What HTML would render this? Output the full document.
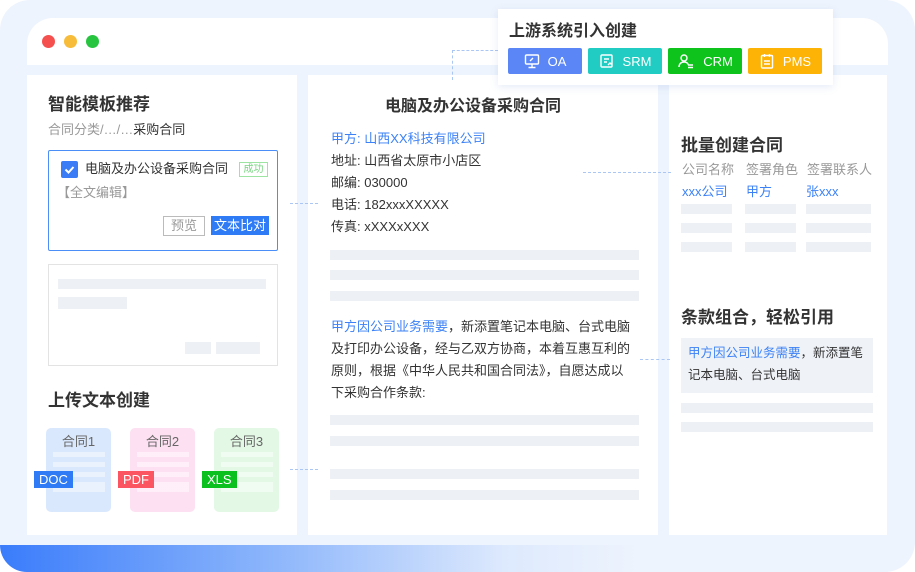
<!DOCTYPE html>
<html><head><meta charset="utf-8"><style>
*{margin:0;padding:0;box-sizing:border-box}
body{width:915px;height:572px;background:#fff;font-family:"Liberation Sans","Noto Sans CJK SC",sans-serif;position:relative;overflow:hidden;color:#333}
.abs{position:absolute}
.bg{left:0;top:0;width:915px;height:572px;background:#eef4fd;border-radius:30px}
.win{left:27px;top:18px;width:861px;height:47px;background:#fff;border-radius:26px 26px 0 0}
.dot{width:13px;height:13px;border-radius:50%;top:35px}
.panel{background:#fff;top:75px;height:460px}
.bar{background:#edf0f5;height:10px}
.h{font-weight:bold;font-size:17px;color:#333}
.t{font-size:13px;color:#333;line-height:22px}
.blue{color:#3c82f6}
.dash{border-top:1.5px dashed #a9c6f5;height:0}
.btn{top:48px;height:26px;width:74px;border-radius:2px;color:#fff;font-size:13px;display:flex;align-items:center;justify-content:center;gap:8px}
.card{top:428px;width:65px;height:84px;border-radius:5px}
.tag{color:#fff;font-size:13px;padding:0 5px;height:17px;line-height:17px;top:471px}
</style></head><body>
<div class="abs bg"></div>
<div class="abs" style="left:0;top:545px;width:915px;height:27px;border-radius:0 0 0 30px;background:linear-gradient(90deg,#3a7cfb 0%,#8db6fb 30%,#dde9fd 55%,rgba(238,244,253,0) 70%)"></div>
<div class="abs win"></div>
<div class="abs dot" style="left:42px;background:#f5504e"></div>
<div class="abs dot" style="left:64px;background:#f7bc39"></div>
<div class="abs dot" style="left:86px;background:#27c43f"></div>

<div class="abs panel" style="left:27px;width:270px"></div>
<div class="abs panel" style="left:308px;width:350px"></div>
<div class="abs panel" style="left:669px;width:218px"></div>

<!-- left -->
<div class="abs h" style="left:48px;top:90px">智能模板推荐</div>
<div class="abs" style="left:48px;top:119px;font-size:13px;color:#999">合同分类/…/…<span style="color:#333">采购合同</span></div>
<div class="abs" style="left:48px;top:150px;width:230px;height:101px;border:1.5px solid #4c8ef7;border-radius:2px"></div>
<div class="abs" style="left:61px;top:161px;width:17px;height:17px;background:#3a7cf6;border-radius:2px"><svg width="17" height="17"><path d="M4.5 8.5l3 3 5-5.5" stroke="#fff" stroke-width="2" fill="none"/></svg></div>
<div class="abs t" style="left:85px;top:158px">电脑及办公设备采购合同</div>
<div class="abs" style="left:239px;top:162px;width:29px;height:15px;border:1px solid #9de3a2;color:#7ad583;font-size:10px;line-height:13px;text-align:center">成功</div>
<div class="abs" style="left:57px;top:182px;font-size:13px;color:#999">【全文编辑】</div>
<div class="abs" style="left:163px;top:216px;width:42px;height:20px;border:1px solid #bbb;color:#999;font-size:13px;text-align:center;line-height:18px">预览</div>
<div class="abs" style="left:211px;top:216px;width:58px;height:19px;background:#2f7bf6;color:#fff;font-size:13px;text-align:center;line-height:19px">文本比对</div>
<div class="abs" style="left:48px;top:264px;width:230px;height:102px;border:1px solid #e3e3e3"></div>
<div class="abs bar" style="left:58px;top:279px;width:208px"></div>
<div class="abs bar" style="left:58px;top:297px;width:69px;height:12px"></div>
<div class="abs bar" style="left:185px;top:342px;width:26px;height:12px"></div>
<div class="abs bar" style="left:216px;top:342px;width:44px;height:12px"></div>
<div class="abs h" style="left:48px;top:386px">上传文本创建</div>
<div class="abs card" style="left:46px;background:#dae8fd"><div style="text-align:center;font-size:13px;color:#666;margin-top:3px">合同1</div></div>
<div class="abs card" style="left:130px;background:#fde0f1"><div style="text-align:center;font-size:13px;color:#666;margin-top:3px">合同2</div></div>
<div class="abs card" style="left:214px;background:#e3f8e5"><div style="text-align:center;font-size:13px;color:#666;margin-top:3px">合同3</div></div>
<div class="abs" style="left:53px;top:452px;width:52px;height:40px;background:linear-gradient(#f4f8ff 0 5px,transparent 5px 10px,#f4f8ff 10px 15px,transparent 15px 20px,#f4f8ff 20px 25px,transparent 25px 30px,#f4f8ff 30px 35px);opacity:.6"></div>
<div class="abs" style="left:137px;top:452px;width:52px;height:40px;background:linear-gradient(#fff5fb 0 5px,transparent 5px 10px,#fff5fb 10px 15px,transparent 15px 20px,#fff5fb 20px 25px,transparent 25px 30px,#fff5fb 30px 35px);opacity:.7"></div>
<div class="abs" style="left:221px;top:452px;width:52px;height:40px;background:linear-gradient(#f6fdf7 0 5px,transparent 5px 10px,#f6fdf7 10px 15px,transparent 15px 20px,#f6fdf7 20px 25px,transparent 25px 30px,#f6fdf7 30px 35px);opacity:.7"></div>
<div class="abs tag" style="left:34px;background:#2f7bf6">DOC</div>
<div class="abs tag" style="left:118px;background:#fb5561">PDF</div>
<div class="abs tag" style="left:202px;background:#0ac01e">XLS</div>

<!-- middle -->
<div class="abs h" style="left:385px;top:92px;font-size:16px">电脑及办公设备采购合同</div>
<div class="abs t" style="left:331px;top:128px"><span class="blue">甲方: 山西XX科技有限公司</span><br>地址: 山西省太原市小店区<br>邮编: 030000<br>电话: 182xxxXXXXX<br>传真: xXXXxXXX</div>
<div class="abs bar" style="left:330px;top:250px;width:309px"></div>
<div class="abs bar" style="left:330px;top:270px;width:309px"></div>
<div class="abs bar" style="left:330px;top:291px;width:309px"></div>
<div class="abs t" style="left:331px;top:316px;width:300px"><span class="blue">甲方因公司业务需要</span>，新添置笔记本电脑、台式电脑及打印办公设备，经与乙双方协商，本着互惠互利的原则，根据《中华人民共和国合同法》，自愿达成以下采购合作条款:</div>
<div class="abs bar" style="left:330px;top:415px;width:309px"></div>
<div class="abs bar" style="left:330px;top:436px;width:309px"></div>
<div class="abs bar" style="left:330px;top:469px;width:309px"></div>
<div class="abs bar" style="left:330px;top:490px;width:309px"></div>

<!-- right -->
<div class="abs h" style="left:681px;top:131px">批量创建合同</div>
<div class="abs" style="left:682px;top:159px;font-size:13px;color:#999">公司名称</div>
<div class="abs" style="left:746px;top:159px;font-size:13px;color:#999">签署角色</div>
<div class="abs" style="left:807px;top:159px;font-size:13px;color:#999">签署联系人</div>
<div class="abs blue" style="left:682px;top:181px;font-size:13px">xxx公司</div>
<div class="abs blue" style="left:746px;top:181px;font-size:13px">甲方</div>
<div class="abs blue" style="left:806px;top:181px;font-size:13px">张xxx</div>
<div class="abs bar" style="left:681px;top:204px;width:51px"></div><div class="abs bar" style="left:745px;top:204px;width:51px"></div><div class="abs bar" style="left:806px;top:204px;width:65px"></div>
<div class="abs bar" style="left:681px;top:223px;width:51px"></div><div class="abs bar" style="left:745px;top:223px;width:51px"></div><div class="abs bar" style="left:806px;top:223px;width:65px"></div>
<div class="abs bar" style="left:681px;top:242px;width:51px"></div><div class="abs bar" style="left:745px;top:242px;width:51px"></div><div class="abs bar" style="left:806px;top:242px;width:65px"></div>
<div class="abs h" style="left:681px;top:303px">条款组合，轻松引用</div>
<div class="abs t" style="left:681px;top:338px;width:192px;height:55px;background:#eff2f7;padding:4px 7px;line-height:22px;font-size:12.5px"><span class="blue">甲方因公司业务需要</span>，新添置笔记本电脑、台式电脑</div>
<div class="abs bar" style="left:681px;top:403px;width:192px"></div>
<div class="abs bar" style="left:681px;top:422px;width:192px"></div>

<!-- dashes -->
<div class="abs" style="left:452px;top:50px;width:0;height:30px;border-left:1.5px dashed #a9c6f5"></div>
<div class="abs dash" style="left:452px;top:50px;width:46px"></div>
<div class="abs dash" style="left:290px;top:203px;width:28px"></div>
<div class="abs dash" style="left:583px;top:172px;width:88px"></div>
<div class="abs dash" style="left:640px;top:359px;width:30px"></div>
<div class="abs dash" style="left:290px;top:469px;width:28px"></div>

<!-- popup -->
<div class="abs" style="left:498px;top:9px;width:335px;height:76px;background:#fff;box-shadow:0 2px 8px rgba(80,120,200,.15)"></div>
<div class="abs h" style="left:509px;top:17px;font-size:16px">上游系统引入创建</div>
<div class="abs btn" style="left:508px;background:#5a86f6"><svg width="16" height="16" fill="none" stroke="#fff" stroke-width="1.4"><rect x="1.5" y="2" width="13" height="9" rx="1"/><path d="M8 11v3M4.5 14.5h7M6 8l3-3"/></svg>OA</div>
<div class="abs btn" style="left:588px;background:#21ccc2"><svg width="16" height="16" fill="none" stroke="#fff" stroke-width="1.4"><rect x="2" y="2" width="11" height="12" rx="1"/><path d="M5 6h5M5 9h3M9 12l2-2 2 2"/></svg>SRM</div>
<div class="abs btn" style="left:668px;background:#0dc31c"><svg width="18" height="16" fill="none" stroke="#fff" stroke-width="1.4"><circle cx="7" cy="5" r="3"/><path d="M2 14c0-3 2-5 5-5s4 1.5 4.5 3M11 12h5M11 14.5h5"/></svg>CRM</div>
<div class="abs btn" style="left:748px;background:#fcb305"><svg width="16" height="16" fill="none" stroke="#fff" stroke-width="1.4"><rect x="2.5" y="2.5" width="11" height="12.5" rx="1"/><path d="M5.5 1v3M10.5 1v3M5 8h6M5 11h6"/></svg>PMS</div>
</body></html>
